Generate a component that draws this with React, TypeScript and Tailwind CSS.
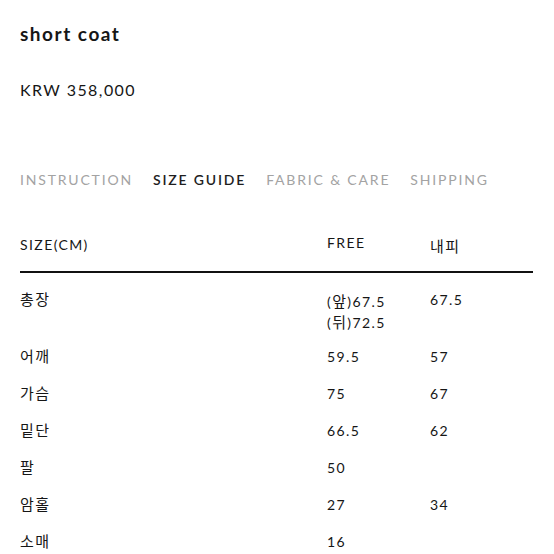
import React from "react";

const rows: { label: string; free: string[]; inner: string }[] = [
  { label: "총장", free: ["(앞)67.5", "(뒤)72.5"], inner: "67.5" },
  { label: "어깨", free: ["59.5"], inner: "57" },
  { label: "가슴", free: ["75"], inner: "67" },
  { label: "밑단", free: ["66.5"], inner: "62" },
  { label: "팔", free: ["50"], inner: "" },
  { label: "암홀", free: ["27"], inner: "34" },
  { label: "소매", free: ["16"], inner: "" },
];

function K({ text }: { text: string }) {
  const parts = text.split(/([\uAC00-\uD7A3]+)/).filter((p) => p.length > 0);
  return (
    <>
      {parts.map((p, i) =>
        /[\uAC00-\uD7A3]/.test(p) ? (
          <span key={i} className="text-[15px]">
            {p}
          </span>
        ) : (
          <React.Fragment key={i}>{p}</React.Fragment>
        )
      )}
    </>
  );
}

export default function App() {
  return (
    <div
      className="w-[554px] h-[554px] overflow-hidden bg-white pl-5 pr-[21px] text-[#161616]"
      style={{ fontFamily: 'Lato, "Noto Sans CJK KR", sans-serif' }}
    >
      <h1 className="pt-[22px] text-[19px] leading-[24px] font-bold tracking-[0.08em]">short coat</h1>
      <p className="mt-8 text-[16px] leading-[24px] tracking-[0.09em]">KRW 358,000</p>

      <div className="mt-[68px] flex gap-5 text-[14px] leading-[20px] tracking-[0.13em]">
        <span className="text-[#a3a3a3]">INSTRUCTION</span>
        <span className="text-[#1e1e1e] font-semibold">SIZE GUIDE</span>
        <span className="text-[#a3a3a3]">FABRIC &amp; CARE</span>
        <span className="text-[#a3a3a3]">SHIPPING</span>
      </div>

      <div className="mt-[43px] text-[14px] leading-[23px] tracking-[0.1em]">
        <div className="grid grid-cols-[307px_103px_1fr] pb-[15px] border-b-2 border-[#111]">
          <div>SIZE(CM)</div>
          <div className="-mt-[2px]">FREE</div>
          <div className="translate-y-[2px]">
            <K text="내피" />
          </div>
        </div>
        {rows.map((r, idx) => (
          <div
            key={r.label}
            className={
              idx === 0
                ? "grid grid-cols-[307px_103px_1fr] pt-[15px] pb-0 -mb-[2px]"
                : "grid grid-cols-[307px_103px_1fr] pt-[13px] pb-px"
            }
          >
            <div>
              <K text={r.label} />
            </div>
            <div className="flex flex-col">
              {r.free.map((f, j) => (
                <span key={f} className={j === 0 && r.free.length > 1 ? "pt-[2px] -mb-[2px]" : ""}>
                  <K text={f} />
                </span>
              ))}
            </div>
            <div>{r.inner}</div>
          </div>
        ))}
      </div>
    </div>
  );
}
